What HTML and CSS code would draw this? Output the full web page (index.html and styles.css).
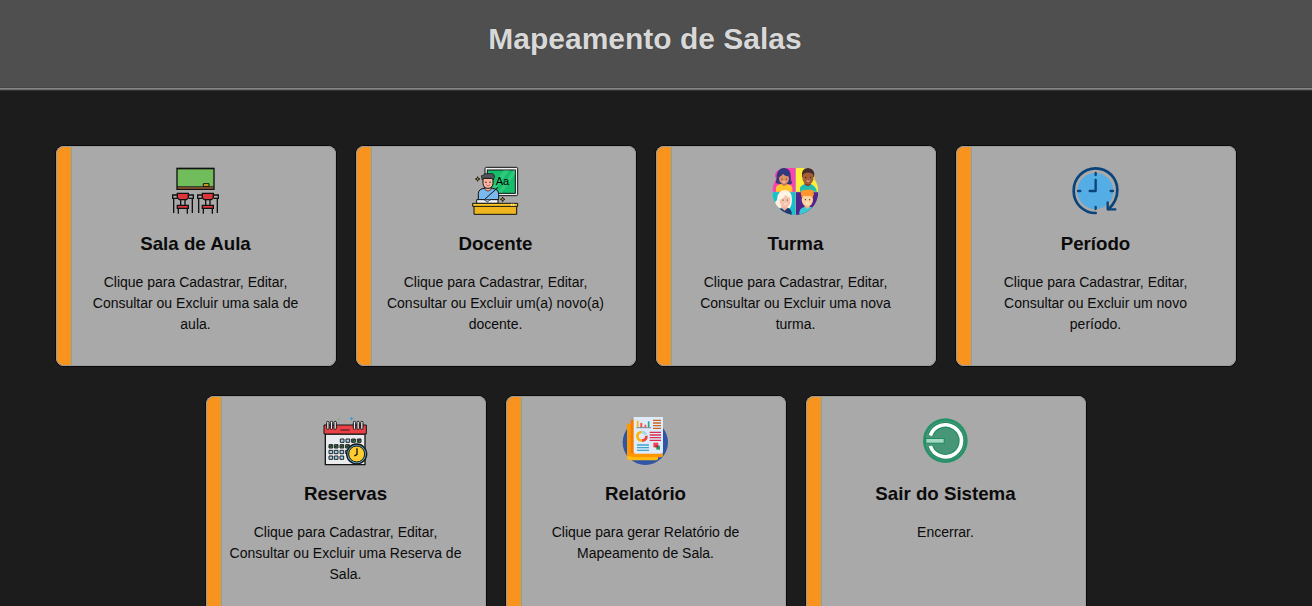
FILE: index.html
```html
<!DOCTYPE html>
<html lang="pt-BR">
<head>
<meta charset="utf-8">
<title>Mapeamento de Salas</title>
<link rel="stylesheet" href="styles.css">
</head>
<body>
<header class="header"><h1 class="title">Mapeamento de Salas</h1></header>
<main class="cards">
  <article class="card">
    <svg class="icon" viewBox="0 0 180 180">
      <rect x="34" y="23" width="115" height="67" fill="#111"/>
      <rect x="38" y="28" width="107" height="51" fill="#71bd5b"/>
      <rect x="38" y="81" width="107" height="6" fill="#794b2c"/>
      <path d="M115 79v-8h17v8z" fill="#e6b32a" stroke="#111" stroke-width="3"/>
      <g id="chair" stroke="#111" stroke-width="4">
        <path d="M36 105H23v10h13M72 105h13v10H72M26 115v44M82 115v44" fill="none"/>
        <path d="M40 146v15M67 146v15M47 119v17M60 119v17" fill="none"/>
        <path d="M37 100h33v14l-6 5H43l-6-5z" fill="#df3439"/>
        <path d="M37 136h33v9H37z" fill="#df3439"/>
      </g>
      <use href="#chair" x="75"/>
    </svg>
    <h3 class="name">Sala de Aula</h3>
    <p class="text">Clique para Cadastrar, Editar, Consultar ou Excluir uma sala de aula.</p>
  </article>
  <article class="card">
    <svg class="icon" viewBox="0 0 180 180">
      <rect x="60" y="22" width="98" height="85" rx="4" fill="#eee" stroke="#111" stroke-width="3"/>
      <rect x="67" y="30" width="84" height="70" fill="#16bd6a" stroke="#111" stroke-width="3"/>
      <path d="M116 31h18l-50 66H70zM145 31h5v12l-40 55H99z" fill="#45d28a" opacity=".55"/>
      <text class="board-text" x="92" y="76">Aa</text>
      <path d="M40 119V101q0-14 18-16h24q19 2 19 18v16z" fill="#79b9ef" stroke="#111" stroke-width="3"/>
      <path d="M60 80v9q9 9 18 0v-9" fill="#ffb19c" stroke="#111" stroke-width="2"/>
      <path d="M54 55v15q1 15 15 15t15-15V55z" fill="#ffb49f" stroke="#111" stroke-width="3"/>
      <path d="M51 59l-2-12 8-2 2-4h25l5 7-4 12-5-5H57z" fill="#50545b" stroke="#111" stroke-width="2"/>
      <path d="M63 65v4M75 65v4" stroke="#111" stroke-width="3"/>
      <path d="M63 74q6 6 12 0" fill="#fff" stroke="#8d3334" stroke-width="2"/>
      <path d="M99 82L58 119" stroke="#111" stroke-width="3"/>
      <path d="M35 119h64v11H35z" fill="#f5f7f8" stroke="#111" stroke-width="3"/>
      <path d="M57 119l10 7 10-7" fill="#80bdeb" stroke="#111" stroke-width="2"/>
      <path d="M27 137h128v26H27z" fill="#efb51f" stroke="#111" stroke-width="3"/>
      <path d="M23 130h135v9H23z" fill="#ffca27" stroke="#111" stroke-width="3"/>
      <path d="M140 131v7M146 131v7" stroke="#fff4b0" stroke-width="3"/>
      <path d="M38 50l2 5 5 2-5 2-2 5-2-5-5-2 5-2zM113 111l2 5 5 2-5 2-2 5-2-5-5-2 5-2z" fill="#b28a24" stroke="#111" stroke-width="2.5"/>
    </svg>
    <h3 class="name">Docente</h3>
    <p class="text">Clique para Cadastrar, Editar, Consultar ou Excluir um(a) novo(a) docente.</p>
  </article>
  <article class="card">
    <svg class="icon" viewBox="0 0 180 180">
      <defs><clipPath id="people"><circle cx="91" cy="96" r="69"/><rect x="30" y="23" width="120" height="45" rx="22"/></clipPath></defs>
      <g clip-path="url(#people)">
        <path d="M22 55q10-30 40-31h29v71H22z" fill="#fa43b1"/>
        <path d="M93 24h20q38 5 47 54v17H93z" fill="#ffef3a"/>
        <path d="M22 97h69v68H22z" fill="#10c4ce"/>
        <path d="M93 97h67v68H93z" fill="#52258b"/>
        <path d="M32 69q4-12 3-24 5-22 23-21 19 2 19 24-1 13 5 22-13 8-23-2-10 8-27 1z" fill="#32387d"/>
        <path d="M33 95V83q2-9 18-11h12q17 2 19 11v12z" fill="#ffc72d"/>
        <path d="M51 64v10q7 7 14 0V64z" fill="#c87553"/>
        <ellipse cx="57" cy="56" rx="15" ry="16" fill="#df9168"/>
        <path d="M40 52q2-21 19-20 13 1 15 17-15 0-20-8-4 8-14 11z" fill="#32387d"/>
        <path d="M105 95V83q3-8 17-12h12q18 4 22 24z" fill="#21bdb0"/>
        <path d="M118 65h20v8q-9 12-20 0z" fill="#82452e"/>
        <path d="M111 51q-4-25 18-27 22 2 19 27z" fill="#452c2a"/>
        <ellipse cx="129" cy="53" rx="17" ry="20" fill="#a65e38"/>
        <path d="M113 42q4-14 16-14t16 14q-17-9-32 0z" fill="#452c2a"/>
        <path d="M27 143q-2-13 9-23 1-29 24-30 22 2 21 28 0 18-7 27z" fill="#ffefdd"/>
        <path d="M36 165q1-18 17-21h16q11 3 12 21z" fill="#293571"/>
        <path d="M49 135h19v9l-9 8-10-8z" fill="#f0b39e"/>
        <ellipse cx="60" cy="122" rx="16" ry="20" fill="#f6c3ae"/>
        <path d="M42 120q2-25 21-25 9 2 13 17-10 0-14-8-6 12-20 16z" fill="#fff5e5"/>
        <path d="M103 165q-2-22 17-25h15q17 4 18 25z" fill="#38c9d2"/>
        <path d="M119 132h15v9l-7 6-8-6z" fill="#efb286"/>
        <ellipse cx="127" cy="119" rx="17" ry="20" fill="#ffd2a2"/>
        <path d="M111 116l-4-18q4-11 16-8 20-5 23 4 2 10-4 22l-4-8q-12 1-24-1z" fill="#ff952e"/>
      </g>
      <g fill="#222"><circle cx="51" cy="57" r="1.8"/><circle cx="64" cy="57" r="1.8"/><circle cx="122" cy="52" r="2"/><circle cx="137" cy="52" r="2"/><circle cx="54" cy="120" r="1.8"/><circle cx="67" cy="120" r="1.8"/><circle cx="121" cy="119" r="1.8"/><circle cx="134" cy="119" r="1.8"/></g>
      <path d="M53 65q4 4 8 0M125 62q5 5 9 0M57 131q4 3 8 0M123 128q5 5 9 0" fill="none" stroke="#fff" stroke-width="2"/>
    </svg>
    <h3 class="name">Turma</h3>
    <p class="text">Clique para Cadastrar, Editar, Consultar ou Excluir uma nova turma.</p>
  </article>
  <article class="card">
    <svg class="icon" viewBox="0 0 180 180">
      <circle cx="91" cy="93" r="54" fill="#55ade5"/>
      <path d="M92 159C55 159 26 130 26 92S55 25 92 25s65 30 65 65c0 25-11 43-26 57" fill="none" stroke="#08447b" stroke-width="8" stroke-linecap="round"/>
      <path d="M128 127v21h23" fill="none" stroke="#08447b" stroke-width="7" stroke-linecap="round" stroke-linejoin="round"/>
      <path d="M92 60v33H74M92 39v6M92 141v6M39 93h7M137 93h7" fill="none" stroke="#08447b" stroke-width="7" stroke-linecap="round" stroke-linejoin="round"/>
    </svg>
    <h3 class="name">Período</h3>
    <p class="text">Clique para Cadastrar, Editar, Consultar ou Excluir um novo período.</p>
  </article>
  <article class="card">
    <svg class="icon" viewBox="0 0 180 180">
      <path d="M31 72h119v92H31z" fill="#e9ebed" stroke="#151515" stroke-width="4"/>
      <path d="M27 45h127v27H27z" fill="#e94145" stroke="#151515" stroke-width="3"/>
      <path d="M76 60h28" stroke="#651e22" stroke-width="4"/>
      <g fill="#e8eaec" stroke="#151515" stroke-width="3"><rect x="35" y="34" width="7" height="24" rx="3"/><rect x="46" y="34" width="7" height="24" rx="3"/><rect x="57" y="34" width="7" height="24" rx="3"/><rect x="115" y="34" width="7" height="24" rx="3"/><rect x="126" y="34" width="7" height="24" rx="3"/><rect x="137" y="34" width="7" height="24" rx="3"/></g>
      <g fill="#9ed4ed" stroke="#202326" stroke-width="3"><path d="M76 87h11v10H76zM93 87h11v10H93zM42 121h11v10H42zM58 121h11v10H58zM75 121h11v10H75zM92 121h11v10H92zM42 138h11v10H42zM58 138h11v10H58zM75 138h11v10H75z"/></g>
      <g fill="#468552" stroke="#202326" stroke-width="3"><path d="M110 87h11v10h-11zM127 87h11v10h-11zM42 104h11v10H42zM58 104h11v10H58zM75 104h11v10H75zM92 104h11v10H92z"/></g>
      <path d="M112 94l7-6M129 94l7-6M43 111l8-5M60 111l8-5M77 111l8-5M94 111l8-5" stroke="#172019" stroke-width="3"/>
      <circle cx="125" cy="132" r="30" fill="#5cacd7" stroke="#151515" stroke-width="4"/>
      <circle cx="125" cy="132" r="24" fill="#fdcc30" stroke="#151515" stroke-width="3"/>
      <path d="M126 115v18l-8 5" fill="none" stroke="#151515" stroke-width="4"/>
      <path d="M110 20l2 4 4 2-4 2-2 4-2-4-4-2 4-2z" fill="#259ddb"/><circle cx="71" cy="28" r="2" fill="#31aa5c"/><circle cx="99" cy="34" r="2" fill="#e5b838"/>
    </svg>
    <h3 class="name">Reservas</h3>
    <p class="text">Clique para Cadastrar, Editar, Consultar ou Excluir uma Reserva de Sala.</p>
  </article>
  <article class="card">
    <svg class="icon" viewBox="0 0 180 180">
      <circle cx="91" cy="97" r="68" fill="#3155a5"/>
      <path d="M36 41h79v109H42q-6 0-6-6z" fill="#ff9800"/>
      <path d="M36 139h93v7q-1 5-7 5H43q-7-1-7-7z" fill="#ffbd13"/>
      <path d="M47 29h70v110H47z" fill="#f57c00"/>
      <path d="M47 130h97v7q-1 5-7 5H53q-6-1-6-7z" fill="#ff9800"/>
      <path d="M56 21h88v104q0 6-6 6H61q-5 0-5-5z" fill="#dfeafa"/>
      <path d="M68 32v20M79 38v14" stroke="#ffb300" stroke-width="5"/>
      <path d="M79 39v13M91 44v8" stroke="#f4475b" stroke-width="5"/>
      <path d="M101 34v18" stroke="#28a879" stroke-width="5"/>
      <path d="M65 53h43" stroke="#455a64" stroke-width="2"/>
      <path d="M114 31h24M114 39h24M114 47h24M114 55h24" stroke="#c96720" stroke-width="4"/>
      <path d="M104 67h34M104 75h34M104 83h34M104 91h34" stroke="#d72f51" stroke-width="4"/>
      <g fill="none" stroke-width="8"><path d="M80 92a13 13 0 1 1 0-26" stroke="#ffb300"/><path d="M80 66q9 0 13 8" stroke="#9ed7e6"/><path d="M94 77q2 12-13 15" stroke="#f44336"/></g>
      <path d="M66 105h36M66 113h36M66 121h36" stroke="#3fa5c9" stroke-width="4"/>
      <path d="M115 98h15v14h-15z" fill="#f44358"/><path d="M124 107h11v12h-11z" fill="#249969"/><path d="M121 106h9v6h-9z" fill="#a92a3c"/>
    </svg>
    <h3 class="name">Relatório</h3>
    <p class="text">Clique para gerar Relatório de Mapeamento de Sala.</p>
  </article>
  <article class="card">
    <svg class="icon" viewBox="0 0 180 180">
      <circle cx="91" cy="92" r="67" fill="#27966c"/>
      <circle cx="91" cy="92" r="62" fill="#479678" stroke="#208c61" stroke-width="3"/>
      <path d="M46 77a48 48 0 1 1 0 31" fill="none" stroke="#218d62" stroke-width="18"/>
      <path d="M46 77a48 48 0 1 1 0 31" fill="none" stroke="#fff" stroke-width="11"/>
      <path d="M31 84h58v17H31z" fill="#218d62"/><path d="M34 87h52v11H34z" fill="#a6d9c5"/>
    </svg>
    <h3 class="name">Sair do Sistema</h3>
    <p class="text">Encerrar.</p>
  </article>
</main>
</body>
</html>
```
FILE: styles.css
```css
* { box-sizing: border-box; }
body {
  height: 606px;
  margin: 0;
  overflow: hidden;
  background: #1c1c1c;
  color: #0b0b0b;
  font-family: "Liberation Sans", Arial, sans-serif;
}
.header {
  height: 91px;
  padding: 21px 22px 0 0;
  background: #4f4f4f;
  border-bottom: 1px solid #303232;
  box-shadow: inset 0 -1px #6b6c6c, inset 0 -2px #858686, inset 0 -3px #464646;
}
.title {
  margin: 0;
  color: #d8d8d8;
  font-size: 30px;
  line-height: 36px;
  text-align: center;
  text-shadow: 0 0 1px #333;
}
.cards {
  display: flex;
  flex-wrap: wrap;
  justify-content: center;
  gap: 30px 20px;
  padding: 55px 46px 0 26px;
}
.card {
  display: flex;
  flex-direction: column;
  align-items: center;
  width: 280px;
  height: 220px;
  padding: 14px 16px 0 15px;
  border-radius: 8px;
  background: linear-gradient(to right, #f8941d 15px, #79a7b4 15px 16px, #a9a9a9 16px);
  box-shadow: 0 0 0 1px #0a0a0a, inset 0 0 0 1px #9b9b9b;
}
.icon {
  flex: none;
  width: 60px;
  height: 60px;
  margin-right: 1px;
}
.board-text {
  font: 33px "Liberation Sans", sans-serif;
}
.name {
  margin: 13px 0 17px;
  font-size: 18.72px;
  line-height: 22px;
  text-align: center;
}
.text {
  width: 233px;
  margin: 0;
  font-size: 14px;
  line-height: 21px;
  text-align: center;
}
```
